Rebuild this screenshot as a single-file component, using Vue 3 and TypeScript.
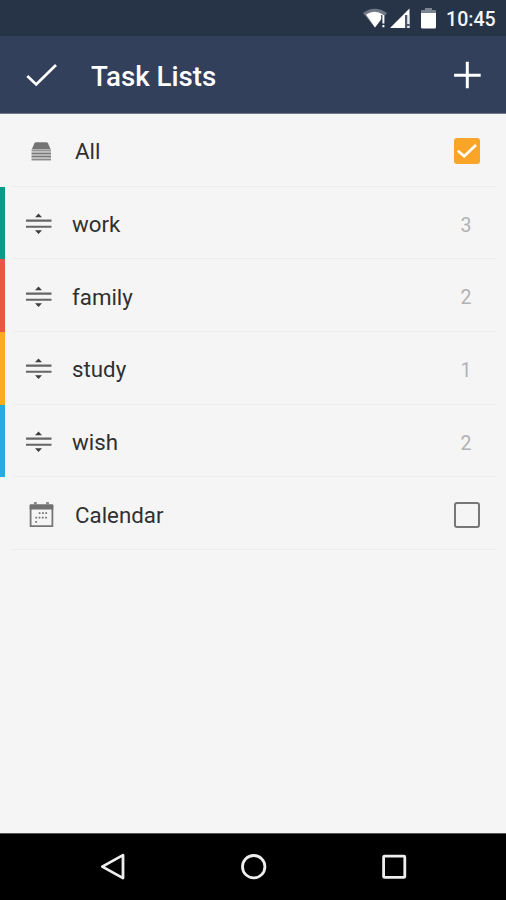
<script setup lang="ts">
import { ref } from 'vue'

interface TaskList {
  name: string
  count: number
  tone: string
}

const lists: TaskList[] = [
  { name: 'work', count: 3, tone: 'teal' },
  { name: 'family', count: 2, tone: 'red' },
  { name: 'study', count: 1, tone: 'amber' },
  { name: 'wish', count: 2, tone: 'blue' },
]

const allChecked = ref(true)
const calendarChecked = ref(false)
</script>

<template>
  <div class="screen">
    <div class="status">
      <svg class="wifi" width="24" height="22" viewBox="0 0 24 22">
        <path d="M0 6Q11.5-2.5 24 6L12 20.5Z" fill="#6f7986" />
        <path d="M3 7.5Q11.5 2 20 7.5L19 11L12 20.5Z" fill="#fff" />
        <path d="M18.2 8H23V21H18.2Z" fill="#273447" />
        <path d="M19.4 8H21.4V16.5H19.4ZM19.4 18H21.4V20.3H19.4Z" fill="#fff" />
      </svg>
      <svg class="signal" width="21" height="21" viewBox="0 0 21 21">
        <path d="M0 20L19.5 .5V20Z" fill="#fff" />
        <path d="M15 7H19.5V20H15Z" fill="#4c586a" />
        <path d="M17.2 7H19.5V16H17.2ZM17.2 18H19.5V20H17.2Z" fill="#e8ebef" />
      </svg>
      <svg class="battery" width="15" height="21" viewBox="0 0 15 21">
        <path d="M0 5V3Q0 2 1 2H4V0H11V2H14Q15 2 15 3V5Z" fill="#7b8490" />
        <path d="M0 5H15V19Q15 20.5 13.5 20.5H1.5Q0 20.5 0 19Z" fill="#fff" />
      </svg>
      <span class="time">10:45</span>
    </div>

    <header class="bar">
      <svg class="done" width="32" height="26" viewBox="0 0 32 26">
        <path d="M2.3 14L11.2 22.4L31 3" fill="none" stroke="#fff" stroke-width="2.8" />
      </svg>
      <h1>Task Lists</h1>
      <svg class="add" width="28" height="28" viewBox="0 0 28 28">
        <path d="M14.3 .8V27.3M1.1 14.2H27.7" stroke="#fff" stroke-width="3" />
      </svg>
    </header>

    <main class="lists">
      <div class="row wide" @click="allChecked = !allChecked">
        <svg class="icon stack" width="20" height="19" viewBox="0 0 20 19">
          <path d="M5 .3H15.5Q16.5 .3 17 1.2L19.7 7.5H.7L3.5 1.2Q4 .3 5 .3Z" fill="#747474" />
          <path d="M.6 7.5H20V18.5H.6Z" fill="#cbcbcb" />
          <path d="M.6 7.7H20V9.2H.6Z" fill="#969696" />
          <path d="M.6 10.7H20V12.3H.6ZM.6 13.7H20V15.2H.6Z" fill="#777" />
          <path d="M.6 16.8H20V18.3H.6Z" fill="#8a8a8a" />
        </svg>
        <span class="label">All</span>
        <span class="check" :class="{ on: allChecked }">
          <svg v-if="allChecked" width="26" height="26" viewBox="0 0 26 26">
            <path d="M3.8 12.8L10.2 18.2L22 7" fill="none" stroke="#fff" stroke-width="2.8" />
          </svg>
        </span>
      </div>

      <div v-for="list in lists" :key="list.name" class="row" :class="list.tone">
        <svg class="icon" width="26" height="22" viewBox="0 0 26 22">
          <path d="M9 4.3L12.5 .5L16 4.3ZM9 17.2L12.5 21L16 17.2Z" fill="#3d3d3d" />
          <path d="M0 7.6H25.5M0 13.8H25.5" stroke="#666" stroke-width="2.1" />
        </svg>
        <span class="label">{{ list.name }}</span>
        <span class="count">{{ list.count }}</span>
      </div>

      <div class="row wide" @click="calendarChecked = !calendarChecked">
        <svg class="icon cal" width="25" height="26" viewBox="0 0 25 26">
          <path d="M1.6 4.2H23.4V24.2H1.6Z" fill="none" stroke="#777" stroke-width="1.8" />
          <path d="M1.7 2.2H23.3Q24.3 2.2 24.3 3.2V7.5H.7V3.2Q.7 2.2 1.7 2.2Z" fill="#717171" />
          <path d="M6.3 0V3M18.5 0V3" stroke="#888" stroke-width="2.8" />
          <path d="M9.7 11.2H19.5M6.3 15.6H19.5M6.3 19.8H8.3" stroke="#777" stroke-width="1.8" stroke-dasharray="1.8 1.5" />
        </svg>
        <span class="label">Calendar</span>
        <span class="check" :class="{ on: calendarChecked }"></span>
      </div>
    </main>

    <nav class="nav">
      <svg width="28" height="28" viewBox="0 0 28 28">
        <path d="M3.3 13.6L24 2.1V25.1Z" />
      </svg>
      <svg width="28" height="28" viewBox="0 0 28 28">
        <circle cx="13.7" cy="13.7" r="11.2" />
      </svg>
      <svg width="28" height="28" viewBox="0 0 28 28">
        <rect x="3.6" y="3.2" width="21.2" height="21.2" rx="1" />
      </svg>
    </nav>
  </div>
</template>

<style>
body {
  margin: 0;
}
</style>

<style scoped>
.screen {
  display: flex;
  flex-direction: column;
  width: 506px;
  height: 900px;
  overflow: hidden;
  background: #f5f5f5;
  font-family: Roboto, sans-serif;
}
svg {
  display: block;
  flex: none;
}
.status {
  display: flex;
  align-items: center;
  justify-content: flex-end;
  box-sizing: border-box;
  height: 36px;
  padding-right: 11px;
  background: #273447;
}
.signal {
  margin-left: 3px;
}
.battery {
  margin-left: 10px;
}
.time {
  width: 49px;
  margin: 3px 0 0 10px;
  color: #f4f6f8;
  font-size: 19.6px;
  font-weight: 500;
  line-height: 24px;
  white-space: nowrap;
}
.bar {
  display: flex;
  align-items: center;
  box-sizing: border-box;
  height: 78px;
  padding: 0 25px;
  border-bottom: 1px solid #737b8b;
  background: #32405b;
}
h1 {
  flex: 1;
  margin: 4px 0 0 34px;
  color: #fff;
  font-size: 27.7px;
  font-weight: 500;
  line-height: 34px;
}
.lists {
  flex: 1;
}
.row {
  display: flex;
  align-items: center;
  position: relative;
  box-sizing: border-box;
  height: 72.7px;
  padding: 2px 26px 0;
}
.row::after {
  content: '';
  position: absolute;
  right: 10px;
  bottom: 0;
  left: 12px;
  height: 1px;
  background: #ededed;
}
.teal,
.red,
.amber,
.blue {
  padding-left: 21px;
  border-left: 5px solid;
}
.row.teal::after,
.row.red::after,
.row.amber::after,
.row.blue::after {
  left: 8px;
}
.teal {
  border-left-color: #099b87;
}
.red {
  border-left-color: #ea5548;
}
.amber {
  border-left-color: #fdaa23;
}
.blue {
  border-left-color: #28abe2;
}
.label {
  flex: 1;
  margin: 0 0 0 20px;
  color: #303030;
  font-size: 22.3px;
  line-height: 30px;
}
.wide .icon {
  margin-left: 3px;
}
.wide .stack {
  margin: 0 3px 0 5px;
}
.wide .label {
  margin-left: 21px;
}
.count {
  width: 28px;
  margin-top: 3px;
  color: #b2b2b2;
  font-size: 19.5px;
  line-height: 26px;
  text-align: center;
}
.check {
  box-sizing: border-box;
  width: 26px;
  height: 26px;
  border: 2.4px solid #777;
  border-radius: 3px;
}
.check.on {
  border: 0;
  background: #faa528;
}
.nav {
  display: flex;
  align-items: center;
  justify-content: space-between;
  box-sizing: border-box;
  height: 67px;
  padding: 0 98px 0 99px;
  border-top: 1px solid #555;
  background: #000;
}
.nav svg {
  fill: none;
  stroke: #eee;
  stroke-width: 2.8;
  stroke-linejoin: round;
}
</style>
